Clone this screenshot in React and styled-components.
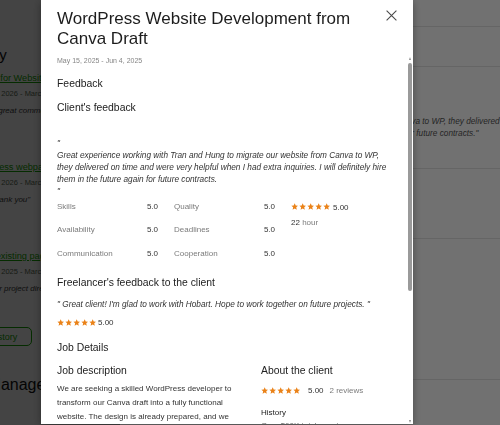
import React from "react";
import styled, { createGlobalStyle } from "styled-components";

const GlobalStyle = createGlobalStyle`
  * { box-sizing: border-box; }
  html, body {
    margin: 0;
    padding: 0;
    width: 500px;
    height: 425px;
    overflow: hidden;
    background: #ffffff;
  }
  body {
    font-family: "Liberation Sans", Arial, Helvetica, sans-serif;
    color: #222;
  }
`;

/* ---------- profile page underneath ---------- */

const ProfilePage = styled.main`
  height: 425px;
  padding-top: 46px;
  margin-left: -40px;
  background: #ffffff;
  overflow: hidden;
`;

const PageHeading = styled.h2`
  margin: 0;
  font-size: 15px;
  line-height: 18px;
  font-weight: 500;
  color: #111;
  white-space: nowrap;
`;

const HistoryList = styled.ul`
  list-style: none;
  margin: 7px 0 0;
  padding: 0;
  display: flex;
  flex-direction: column;
  gap: 43px;
`;

const HistoryItem = styled.li`
  display: flex;
  flex-direction: column;
  white-space: nowrap;
`;

const JobLink = styled.a`
  font-size: 9.2px;
  line-height: 14px;
  color: #14a800;
  text-decoration: underline;
`;

const JobDates = styled.span`
  margin-top: 3px;
  font-size: 7.5px;
  line-height: 12px;
  color: #5e6d55;
`;

const JobQuote = styled.span`
  margin-top: 5px;
  font-size: 8px;
  line-height: 12px;
  font-style: italic;
  color: #3d3d3d;
`;

const OutlineButton = styled.button`
  margin-top: 32px;
  align-self: flex-start;
  height: 19px;
  padding: 0 14px 0 8px;
  border: 1px solid #14a800;
  border-radius: 5px;
  background: transparent;
  color: #14a800;
  font-family: inherit;
  font-size: 9px;
  white-space: nowrap;
`;

const SectionHeading = styled.h2`
  margin: 29px 0 0;
  font-size: 16px;
  line-height: 19px;
  font-weight: 400;
  color: #111;
  white-space: nowrap;
`;

/* ---------- job drawer (first layer) ---------- */

const Dim = styled.div`
  position: fixed;
  inset: 0;
  background: rgba(0, 0, 0, ${(p) => p.$alpha});
`;

const Drawer = styled.aside`
  position: fixed;
  top: 0;
  bottom: 0;
  left: 120px;
  right: 0;
  background: #ffffff;
  overflow: hidden;
  display: flex;
  flex-direction: column;
`;

const DrawerSection = styled.section`
  height: ${(p) => p.$h}px;
  flex-shrink: 0;
  border-bottom: 1px solid #e4e4e4;
  padding: ${(p) => p.$pad || "10px 15px"};
  font-size: 9px;
  color: #333;
`;

const DrawerReview = styled.p`
  margin: 0;
  font-size: 8.25px;
  line-height: 12px;
  font-style: italic;
  color: #555;
  white-space: nowrap;
`;

/* ---------- modal ---------- */

const ModalLayer = styled.div`
  position: fixed;
  inset: 0;
  background: rgba(0, 0, 0, 0.557);
  display: flex;
  align-items: flex-start;
  padding-left: 41px;
`;

const Modal = styled.div`
  width: 372px;
  height: 424px;
  background: #ffffff;
  display: flex;
  flex-direction: column;
  box-shadow: 0 2px 8px rgba(0, 0, 0, 0.35);
`;

const ModalHeader = styled.header`
  display: flex;
  justify-content: space-between;
  align-items: flex-start;
  padding: 9px 16px 7px 16px;
`;

const Title = styled.h1`
  margin: 0;
  max-width: 320px;
  font-size: 17px;
  line-height: 19.5px;
  font-weight: 400;
  color: #1d1d1d;
`;

const CloseButton = styled.button`
  margin-top: 1px;
  width: 11px;
  height: 11px;
  padding: 0;
  border: 0;
  background: none;
  display: flex;
  cursor: pointer;
`;

const ModalMain = styled.div`
  flex: 1;
  min-height: 0;
  display: flex;
`;

const ModalBody = styled.div`
  flex: 1;
  min-width: 0;
  overflow-y: auto;
  padding: 1px 10px 0 16px;
  scrollbar-width: none;
  &::-webkit-scrollbar {
    display: none;
  }
`;

/* scroll rail drawn beside the scrolling body */
const ScrollRail = styled.div`
  width: 6px;
  flex-shrink: 0;
  display: flex;
  flex-direction: column;
  align-items: center;
`;

const RailArrow = styled.span`
  width: 0;
  height: 0;
  border-left: 1.8px solid transparent;
  border-right: 1.8px solid transparent;
  ${(p) =>
    p.$down
      ? "border-top: 3px solid #8c8c8c; margin-top: auto; margin-bottom: 1.5px;"
      : "border-bottom: 3px solid #8c8c8c; margin-top: 2px;"}
`;

const RailThumb = styled.span`
  margin-top: 3.3px;
  width: 4px;
  height: 228px;
  border-radius: 2px;
  background: #9a9a9a;
`;

const Content = styled.div`
  width: 334px;
  padding-bottom: 24px;
`;

const DateRange = styled.div`
  font-size: 7px;
  line-height: 10px;
  color: #868686;
`;

const Heading = styled.h3`
  margin: ${(p) => p.$mt}px 0 0;
  font-size: 10.4px;
  line-height: 14px;
  font-weight: 400;
  color: #222;
`;

const QuoteText = styled.p`
  margin: ${(p) => p.$mt}px 0 0;
  font-size: 8.25px;
  line-height: 12px;
  font-style: italic;
  color: #333;
`;

const RatingsRow = styled.div`
  margin-top: 3px;
  display: flex;
  gap: 16px;
`;

const RatingsGrid = styled.div`
  display: grid;
  grid-template-columns: repeat(2, 101px);
  column-gap: 16px;
  row-gap: 11.4px;
`;

const RatingItem = styled.div`
  display: flex;
  justify-content: space-between;
  font-size: 8px;
  line-height: 12px;
`;

const RatingLabel = styled.span`
  color: #7b7b7b;
`;

const RatingValue = styled.span`
  color: #333;
`;

const Summary = styled.div`
  display: flex;
  flex-direction: column;
  gap: 4px;
`;

const ScoreLine = styled.div`
  margin-top: ${(p) => p.$mt || 0}px;
  display: flex;
  align-items: center;
  height: 12px;
  font-size: 8px;
  color: #333;
`;

const StarRow = styled.span`
  display: inline-flex;
  gap: 0.5px;
  color: #ea8218;
  margin-right: ${(p) => p.$gap}px;
`;

const Muted = styled.span`
  color: #7b7b7b;
  margin-left: ${(p) => p.$ml || 0}px;
`;

const HoursLine = styled.div`
  font-size: 8px;
  line-height: 12px;
  color: #333;
`;

const JobGrid = styled.div`
  margin-top: 9px;
  display: grid;
  grid-template-columns: 188px 1fr;
  column-gap: 16px;
`;

const Column = styled.div`
  display: flex;
  flex-direction: column;
`;

const ColumnHeading = styled.h4`
  margin: ${(p) => p.$mt || 0}px 0 0;
  font-size: 10.4px;
  line-height: 14px;
  font-weight: 400;
  color: #222;
`;

const Paragraph = styled.p`
  margin: 4.7px 0 0;
  font-size: 8px;
  line-height: 13.6px;
  color: #333;
`;

const FactLabel = styled.div`
  margin-top: ${(p) => p.$mt}px;
  font-size: 8px;
  line-height: 12px;
  color: #222;
`;

const FactValue = styled.div`
  font-size: 8px;
  line-height: 13px;
  color: #6b6b6b;
`;

const TagRow = styled.div`
  margin-top: 8px;
  display: flex;
  flex-wrap: wrap;
  gap: 5px;
`;

const Tag = styled.span`
  font-size: 7.5px;
  line-height: 15px;
  padding: 0 7px;
  border-radius: 8px;
  background: #eeeeee;
  color: #444;
`;

const Star = () => (
  <svg width="7.4" height="7.4" viewBox="0 0 24 24">
    <path
      d="M12 1.2l3.2 7.1 7.6.7-5.8 5.1 1.8 7.6L12 17.7l-6.8 4 1.8-7.6-5.8-5.1 7.6-.7z"
      fill="currentColor"
    />
  </svg>
);

const Stars = ({ gap = 2 }) => (
  <StarRow $gap={gap}>
    {[0, 1, 2, 3, 4].map((i) => (
      <Star key={i} />
    ))}
  </StarRow>
);

const ratings = [
  ["Skills", "5.0"],
  ["Quality", "5.0"],
  ["Availability", "5.0"],
  ["Deadlines", "5.0"],
  ["Communication", "5.0"],
  ["Cooperation", "5.0"],
];

const history = [
  {
    title: "Migration for Website Redesign",
    dates: "January 19, 2026 - March 2, 2026",
    quote: "Quick and great communication throughout",
  },
  {
    title: "A WordPress webpage refresh",
    dates: "January 12, 2026 - March 1, 2026",
    quote: "\"Perfect, thank you\"",
  },
  {
    title: "Improve existing page layout",
    dates: "October 24, 2025 - March 2, 2026",
    quote: "Really clear project direction and support",
  },
];

export default function App() {
  return (
    <>
      <GlobalStyle />
      <ProfilePage>
        <PageHeading>History</PageHeading>
        <HistoryList>
          {history.map((h) => (
            <HistoryItem key={h.title}>
              <JobLink href="#">{h.title}</JobLink>
              <JobDates>{h.dates}</JobDates>
              <JobQuote>{h.quote}</JobQuote>
            </HistoryItem>
          ))}
        </HistoryList>
        <OutlineButton>View history</OutlineButton>
        <SectionHeading>HR Manager</SectionHeading>
      </ProfilePage>

      <Dim $alpha={0.4} />
      <Drawer>
        <DrawerSection $h={27}>Job details</DrawerSection>
        <DrawerSection $h={40}>Completed</DrawerSection>
        <DrawerSection $h={102} $pad="49px 15px 0 1px">
          <DrawerReview>
            "Great experience working with Tran and Hung to migrate our website from Canva to WP, they delivered on time and were very
            <br />
            helpful when I had extra inquiries. I will definitely hire them in the future again for future contracts."
          </DrawerReview>
        </DrawerSection>
        <DrawerSection $h={70}>Rating</DrawerSection>
        <DrawerSection $h={141}>Earnings</DrawerSection>
        <DrawerSection $h={60}>Files</DrawerSection>
      </Drawer>

      <ModalLayer>
        <Modal role="dialog">
          <ModalHeader>
            <Title>WordPress Website Development from Canva Draft</Title>
            <CloseButton aria-label="Close">
              <svg width="11" height="11" viewBox="0 0 11 11">
                <path
                  d="M0.6 0.6L10.4 10.4M10.4 0.6L0.6 10.4"
                  stroke="#4a4a4a"
                  strokeWidth="1.1"
                  fill="none"
                />
              </svg>
            </CloseButton>
          </ModalHeader>

          <ModalMain>
            <ModalBody>
              <Content>
                <DateRange>May 15, 2025 - Jun 4, 2025</DateRange>
                <Heading $mt={11}>Feedback</Heading>
                <Heading $mt={10}>Client's feedback</Heading>
                <QuoteText $mt={23}>
                  "
                  <br />
                  Great experience working with Tran and Hung to migrate our website from Canva to WP, they delivered on time and were very helpful when I had extra inquiries. I will definitely hire them in the future again for future contracts.
                  <br />
                  "
                </QuoteText>

                <RatingsRow>
                  <RatingsGrid>
                    {ratings.map(([label, value]) => (
                      <RatingItem key={label}>
                        <RatingLabel>{label}</RatingLabel>
                        <RatingValue>{value}</RatingValue>
                      </RatingItem>
                    ))}
                  </RatingsGrid>
                  <Summary>
                    <ScoreLine>
                      <Stars gap={3} />
                      5.00
                    </ScoreLine>
                    <HoursLine>
                      22 <Muted>hour</Muted>
                    </HoursLine>
                  </Summary>
                </RatingsRow>

                <Heading $mt={16}>Freelancer's feedback to the client</Heading>
                <QuoteText $mt={9}>
                  " Great client! I'm glad to work with Hobart. Hope to work together on future projects. "
                </QuoteText>
                <ScoreLine $mt={6}>
                  <Stars gap={2} />
                  5.00
                </ScoreLine>

                <Heading $mt={12}>Job Details</Heading>
                <JobGrid>
                  <Column>
                    <ColumnHeading>Job description</ColumnHeading>
                    <Paragraph>
                      We are seeking a skilled WordPress developer to transform our Canva draft into a fully functional website. The design is already prepared, and we need someone to bring it to life on the WordPress platform. The site should be responsive, fast-loading and easy for our team to update on our own. Experience with page builders and basic on-page SEO is a plus.
                    </Paragraph>
                    <ColumnHeading $mt={14}>Skills and expertise</ColumnHeading>
                    <TagRow>
                      <Tag>WordPress</Tag>
                      <Tag>Canva</Tag>
                      <Tag>Web Design</Tag>
                      <Tag>Elementor</Tag>
                      <Tag>Responsive Design</Tag>
                    </TagRow>
                  </Column>
                  <Column>
                    <ColumnHeading>About the client</ColumnHeading>
                    <ScoreLine $mt={7}>
                      <Stars gap={8} />
                      5.00
                      <Muted $ml={6}>2 reviews</Muted>
                    </ScoreLine>
                    <FactLabel $mt={10.6}>History</FactLabel>
                    <FactValue>Over $60K total spent</FactValue>
                    <FactValue>18 hires, 3 active</FactValue>
                    <FactLabel $mt={8}>Location</FactLabel>
                    <FactValue>Hobart, Australia</FactValue>
                    <FactLabel $mt={8}>Member since</FactLabel>
                    <FactValue>Mar 12, 2019</FactValue>
                  </Column>
                </JobGrid>
              </Content>
            </ModalBody>
            <ScrollRail aria-hidden="true">
              <RailArrow />
              <RailThumb />
              <RailArrow $down />
            </ScrollRail>
          </ModalMain>
        </Modal>
      </ModalLayer>
    </>
  );
}
